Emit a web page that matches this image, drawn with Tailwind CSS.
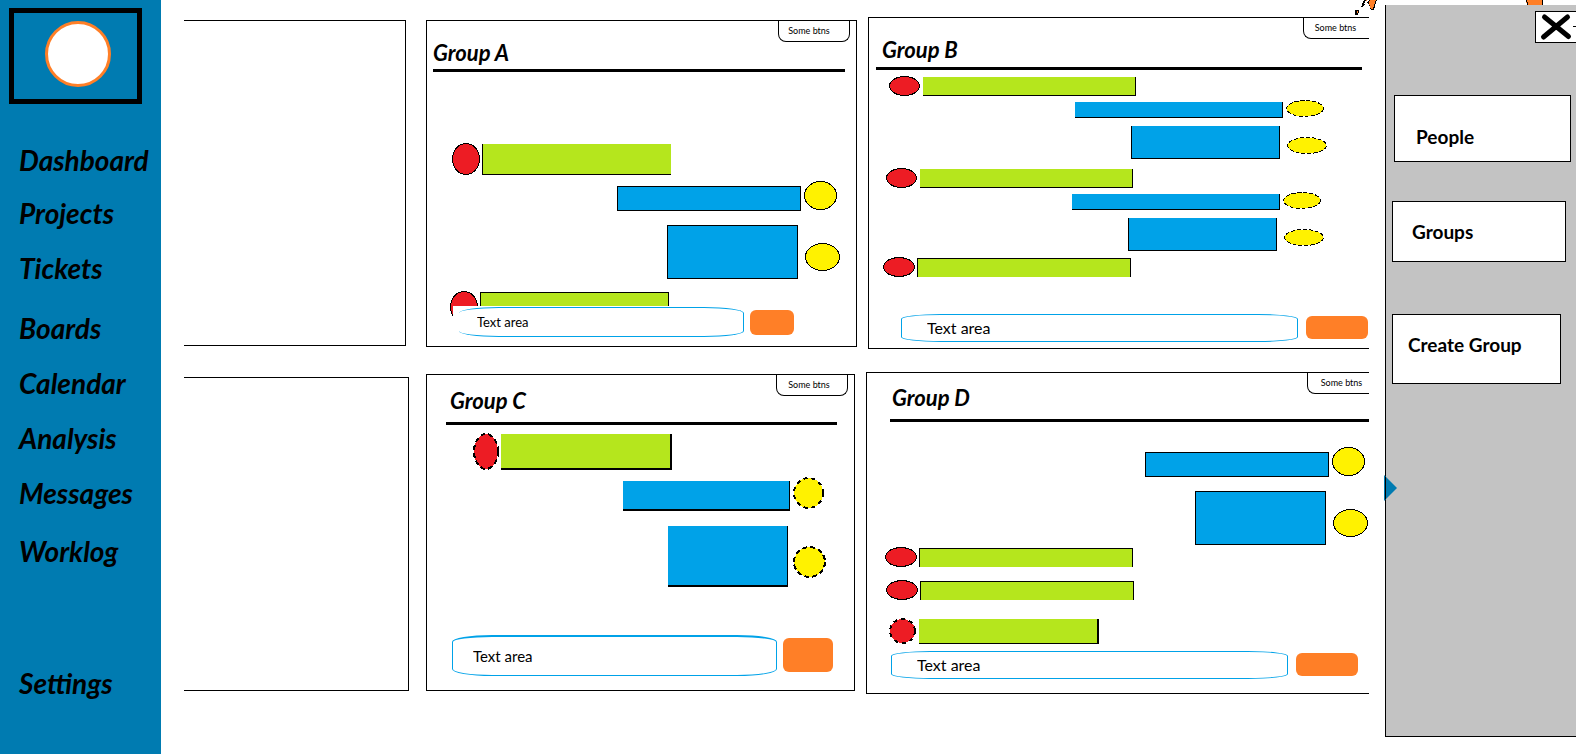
<!DOCTYPE html>
<html lang="en">
<head>
<meta charset="utf-8">
<title>Messages</title>
<script src="https://cdn.jsdelivr.net/npm/@tailwindcss/browser@4"></script>
</head>
<body class="min-h-screen bg-white font-[Lato,'Open_Sans',sans-serif] text-black">
<div class="flex min-h-screen overflow-hidden">

  <!-- Sidebar -->
  <aside class="w-[161px] shrink-0 bg-[#007bb1] pt-2">
    <a href="#" aria-label="Home" class="ml-[9px] flex h-24 w-[133px] justify-center border-5 border-black pt-2">
      <span class="ml-1 size-[66px] rounded-full border-3 border-[#ff7f27] bg-white"></span>
    </a>
    <nav class="flex flex-col pt-10 pl-[19px] text-[28px] leading-8 font-bold italic">
      <a href="#">Dashboard</a>
      <a href="#" class="mt-[21px]">Projects</a>
      <a href="#" class="mt-[23px]">Tickets</a>
      <a href="#" class="mt-[28px]">Boards</a>
      <a href="#" class="mt-[23px]">Calendar</a>
      <a href="#" class="mt-[23px]">Analysis</a>
      <a href="#" class="mt-[23px]">Messages</a>
      <a href="#" class="mt-[26px]">Worklog</a>
      <a href="#" class="mt-[100px]">Settings</a>
    </nav>
  </aside>

  <!-- Conversation boards -->
  <main class="relative min-w-0 flex-1 pt-[17px] pr-4 pl-[23px]">
    <svg class="absolute top-0 right-2 h-4 w-[22px]" viewBox="0 0 22 16" shape-rendering="crispEdges" aria-hidden="true">
      <path d="M0 10h4v2l-1 3H0z"/>
      <path d="M2 11h1v2h-1z" fill="#ff7f27"/>
      <path d="M9 0h2L9 4h2l3-4h8l-2 6-1 4h-3l-2-6-3-1-4 4H6z"/>
      <path d="M15 0h6l-2 5-1 4h-2l-2-6zM11 0h1l-1 2z" fill="#ff7f27"/>
    </svg>

    <div class="flex items-start">
      <section aria-label="Previous board" class="mt-[3px] mr-5 h-[326px] flex-[221_1_0px] border border-l-0 border-black"></section>

      <section class="mt-[3px] mr-[11px] min-w-0 flex-[429_1_0px] border border-black pb-[9px]">
        <header class="mr-[11px] ml-1.5 flex h-[51px] items-start justify-between border-b-3 border-black">
          <h2 class="pt-5 text-[22px] leading-6 font-bold italic">Group A</h2>
          <button class="-mr-[5px] h-[21px] w-[72px] rounded-b-lg border border-t-0 border-black pr-2.5 text-[9px] leading-4">Some btns</button>
        </header>
        <div class="mt-[71px] flex gap-0.5 pl-[25px]">
          <svg class="h-8 w-7" shape-rendering="crispEdges"><ellipse cx="14" cy="16" rx="13.5" ry="15.5" fill="#ed1c24" stroke="#000"/></svg>
          <div class="mt-px h-[31px] w-[189px] border-b border-l border-black bg-[#b5e61d]"></div>
        </div>
        <div class="mt-1.5 flex items-end justify-end gap-[3px] pr-[19px]">
          <div class="h-[25px] w-[184px] border border-black bg-[#00a2e8]"></div>
          <svg class="mb-px h-[29px] w-[33px]" shape-rendering="crispEdges"><ellipse cx="16.5" cy="14.5" rx="16" ry="14" fill="#fff200" stroke="#000"/></svg>
        </div>
        <div class="mt-3.5 flex justify-end gap-[7px] pr-4">
          <div class="h-[54px] w-[131px] border border-black bg-[#00a2e8]"></div>
          <svg class="mt-[18px] h-7 w-[35px]" shape-rendering="crispEdges"><ellipse cx="17.5" cy="14" rx="17" ry="13.5" fill="#fff200" stroke="#000"/></svg>
        </div>
        <div class="mt-3 flex h-[15px] items-start gap-0.5 pl-[23px]">
          <svg class="h-[25px] w-7 shrink-0" shape-rendering="crispEdges"><ellipse cx="14" cy="16" rx="13.5" ry="15.5" fill="#ed1c24" stroke="#000"/></svg>
          <div class="mt-px h-3.5 w-[189px] border border-b-0 border-black bg-[#b5e61d]"></div>
        </div>
        <form class="relative ml-[26px] flex items-center gap-1.5 bg-white pt-px pl-1.5">
          <input aria-label="Message Group A" placeholder="Text area" class="h-[30px] w-[285px] rounded-[40px/6px] border border-l-0 border-[#00a2e8] pl-[18px] text-[13px] placeholder:text-black">
          <button type="button" aria-label="Send to Group A" class="h-[25px] w-11 rounded-md bg-[#ff7f27]"></button>
        </form>
      </section>

      <section class="min-w-0 flex-[500_1_0px] border border-r-0 border-black pb-1.5">
        <header class="mr-[7px] ml-[7px] flex h-[52px] items-start justify-between border-b-3 border-black">
          <h2 class="pt-5 pl-1.5 text-[22px] leading-6 font-bold italic">Group B</h2>
          <button class="-mr-[7px] h-[21px] w-[66px] rounded-bl-lg border border-t-0 border-r-0 border-black pr-0.5 text-[9px] leading-4">Some btns</button>
        </header>
        <div class="mt-1.5 flex gap-[3px] pl-5">
          <svg class="h-5 w-[31px]" shape-rendering="crispEdges"><ellipse cx="15.5" cy="10" rx="15" ry="9.5" fill="#ed1c24" stroke="#000"/></svg>
          <div class="mt-px h-[19px] w-[213px] border-r border-b border-black bg-[#b5e61d]"></div>
        </div>
        <div class="mt-1 flex items-end justify-end gap-[3px] pr-[45px]">
          <div class="h-4 w-[208px] border-r border-b border-black bg-[#00a2e8]"></div>
          <svg class="mb-px h-[17px] w-[38px]" shape-rendering="crispEdges"><ellipse cx="19" cy="8.5" rx="18.5" ry="8" fill="#fff200" stroke="#000" stroke-dasharray="4 2"/></svg>
        </div>
        <div class="mt-2 flex justify-end gap-[7px] pr-[42px]">
          <div class="h-[33px] w-[149px] border border-t-0 border-black bg-[#00a2e8]"></div>
          <svg class="mt-[11px] h-[17px] w-10" shape-rendering="crispEdges"><ellipse cx="20" cy="8.5" rx="19.5" ry="8" fill="#fff200" stroke="#000" stroke-dasharray="4 2"/></svg>
        </div>
        <div class="mt-[9px] flex gap-[3px] pl-[17px]">
          <svg class="h-5 w-[31px]" shape-rendering="crispEdges"><ellipse cx="15.5" cy="10" rx="15" ry="9.5" fill="#ed1c24" stroke="#000"/></svg>
          <div class="mt-px h-[19px] w-[213px] border-r border-b border-black bg-[#b5e61d]"></div>
        </div>
        <div class="mt-1 flex items-end justify-end gap-[3px] pr-[48px]">
          <div class="h-4 w-[208px] border-r border-b border-black bg-[#00a2e8]"></div>
          <svg class="mb-px h-[17px] w-[38px]" shape-rendering="crispEdges"><ellipse cx="19" cy="8.5" rx="18.5" ry="8" fill="#fff200" stroke="#000" stroke-dasharray="4 2"/></svg>
        </div>
        <div class="mt-2 flex justify-end gap-[7px] pr-[45px]">
          <div class="h-[33px] w-[149px] border border-t-0 border-black bg-[#00a2e8]"></div>
          <svg class="mt-[11px] h-[17px] w-10" shape-rendering="crispEdges"><ellipse cx="20" cy="8.5" rx="19.5" ry="8" fill="#fff200" stroke="#000" stroke-dasharray="4 2"/></svg>
        </div>
        <div class="mt-1.5 flex gap-0.5 pl-3.5">
          <svg class="h-5 w-8" shape-rendering="crispEdges"><ellipse cx="16" cy="10" rx="15.5" ry="9.5" fill="#ed1c24" stroke="#000"/></svg>
          <div class="mt-px h-[19px] w-[214px] border border-b-0 border-black bg-[#b5e61d]"></div>
        </div>
        <form class="mt-[37px] flex items-center gap-2 pl-8">
          <input aria-label="Message Group B" placeholder="Text area" class="h-7 w-[397px] rounded-[40px/5px] border border-[#00a2e8] pb-0.5 pl-[25px] text-base placeholder:text-black">
          <button type="button" aria-label="Send to Group B" class="mb-0.5 h-[23px] w-[62px] rounded-md bg-[#ff7f27]"></button>
        </form>
      </section>
    </div>

    <div class="mt-[23px] flex items-start">
      <section aria-label="Previous board" class="mt-[5px] mr-[17px] h-[314px] flex-[224_1_0px] border border-l-0 border-black"></section>

      <section class="mt-0.5 mr-[11px] min-w-0 flex-[427_1_0px] border border-black pb-3.5">
        <header class="mr-[17px] ml-[19px] flex h-[50px] items-start justify-between border-b-3 border-black">
          <h2 class="pt-3.5 pl-1 text-[22px] leading-6 font-bold italic">Group C</h2>
          <button class="-mr-[11px] h-[21px] w-[72px] rounded-b-lg border border-t-0 border-black pr-1.5 text-[9px] leading-4">Some btns</button>
        </header>
        <div class="mt-2 flex gap-0.5 pl-[46px]">
          <svg class="h-[37px] w-[26px]" shape-rendering="crispEdges"><ellipse cx="13" cy="18.5" rx="12" ry="17.5" fill="#ed1c24" stroke="#000" stroke-width="2" stroke-dasharray="5 3"/></svg>
          <div class="mt-px h-9 w-[171px] border-r-2 border-b-2 border-black bg-[#b5e61d]"></div>
        </div>
        <div class="mt-[7px] flex items-end justify-end gap-[3px] pr-[30px]">
          <div class="h-[30px] w-[167px] border-r border-b-2 border-black bg-[#00a2e8]"></div>
          <svg class="mb-0.5 h-8 w-[31px]" shape-rendering="crispEdges"><ellipse cx="15.5" cy="16" rx="14.5" ry="15" fill="#fff200" stroke="#000" stroke-width="2" stroke-dasharray="4 4"/></svg>
        </div>
        <div class="mt-[15px] flex justify-end gap-[5px] pr-7">
          <div class="h-[61px] w-[120px] border-r border-b-2 border-black bg-[#00a2e8]"></div>
          <svg class="mt-5 h-8 w-[33px]" shape-rendering="crispEdges"><ellipse cx="16.5" cy="16" rx="15.5" ry="15" fill="#fff200" stroke="#000" stroke-width="2" stroke-dasharray="5 3"/></svg>
        </div>
        <form class="mt-12 flex items-center gap-1.5 pl-[25px]">
          <input aria-label="Message Group C" placeholder="Text area" class="h-[41px] w-[325px] rounded-[40px/7px] border border-t-2 border-[#00a2e8] pl-5 text-[15px] placeholder:text-black">
          <button type="button" aria-label="Send to Group C" class="mb-0.5 h-[34px] w-[50px] rounded-md bg-[#ff7f27]"></button>
        </form>
      </section>

      <section class="min-w-0 flex-[502_1_0px] border border-r-0 border-black pb-3.5">
        <header class="ml-[23px] flex h-[49px] items-start justify-between border-b-3 border-black">
          <h2 class="pt-[13px] pl-0.5 text-[22px] leading-6 font-bold italic">Group D</h2>
          <button class="h-[21px] w-[62px] rounded-bl-lg border border-t-0 border-r-0 border-black pl-1.5 text-[9px] leading-4">Some btns</button>
        </header>
        <div class="mt-[25px] flex items-end justify-end gap-[3px] pr-1">
          <div class="h-[25px] w-[184px] border border-black bg-[#00a2e8]"></div>
          <svg class="mb-px h-[29px] w-[33px]" shape-rendering="crispEdges"><ellipse cx="16.5" cy="14.5" rx="16" ry="14" fill="#fff200" stroke="#000"/></svg>
        </div>
        <div class="mt-3.5 flex justify-end gap-[7px] pr-px">
          <div class="h-[54px] w-[131px] border border-black bg-[#00a2e8]"></div>
          <svg class="mt-[18px] h-7 w-[35px]" shape-rendering="crispEdges"><ellipse cx="17.5" cy="14" rx="17" ry="13.5" fill="#fff200" stroke="#000"/></svg>
        </div>
        <div class="mt-0.5 flex gap-0.5 pl-[18px]">
          <svg class="h-5 w-8" shape-rendering="crispEdges"><ellipse cx="16" cy="10" rx="15.5" ry="9.5" fill="#ed1c24" stroke="#000"/></svg>
          <div class="mt-px h-[19px] w-[214px] border border-b-0 border-black bg-[#b5e61d]"></div>
        </div>
        <div class="mt-[13px] flex gap-0.5 pl-[19px]">
          <svg class="h-5 w-8" shape-rendering="crispEdges"><ellipse cx="16" cy="10" rx="15.5" ry="9.5" fill="#ed1c24" stroke="#000"/></svg>
          <div class="mt-px h-[19px] w-[214px] border border-b-0 border-black bg-[#b5e61d]"></div>
        </div>
        <div class="mt-[18px] flex gap-[3px] pl-[22px]">
          <svg class="h-[26px] w-[27px]" shape-rendering="crispEdges"><ellipse cx="13.5" cy="13" rx="12.5" ry="12" fill="#ed1c24" stroke="#000" stroke-width="2" stroke-dasharray="4 4"/></svg>
          <div class="mt-px h-[25px] w-[180px] border-r-2 border-b border-black bg-[#b5e61d]"></div>
        </div>
        <form class="mt-[7px] flex items-center gap-2 pl-6">
          <input aria-label="Message Group D" placeholder="Text area" class="h-7 w-[397px] rounded-[40px/5px] border border-[#00a2e8] pb-0.5 pl-[25px] text-base placeholder:text-black">
          <button type="button" aria-label="Send to Group D" class="mb-0.5 h-[23px] w-[62px] rounded-md bg-[#ff7f27]"></button>
        </form>
      </section>
    </div>
  </main>

  <!-- Drawer -->
  <aside class="relative mt-[5px] mb-[17px] flex w-[191px] shrink-0 flex-col border-b border-l border-black bg-[#c3c3c3] pt-1.5 pl-1.5 text-left">
    <svg class="absolute -top-[5px] right-[33px] h-[5px] w-[17px]" viewBox="0 0 17 5" shape-rendering="crispEdges" aria-hidden="true"><path d="M0 0h17v5H1z" fill="#ff7f27"/><path d="M0 0h1v2h1v3H1V2H0zM16 0h1v5h-1z"/></svg>
    <svg class="absolute top-[470px] -left-0.5 h-[26px] w-[13px]" viewBox="0 0 13 26" aria-hidden="true"><path d="M0 0L13 13L0 26z" fill="#007bb1"/><path d="M1 2h1v22h-1z"/></svg>
    <button aria-label="Close" class="h-8 w-[41px] self-end border border-r-0 border-black bg-white">
      <svg class="h-[30px] w-10" viewBox="0 0 40 30" aria-hidden="true"><path d="M8.500 5L32.500 24.500M31.500 5L7.500 25" stroke="#000" stroke-width="5" stroke-linecap="round"/><path d="M37 14h3v1h-3z"/></svg>
    </button>
    <button class="mt-[52px] mr-[5px] ml-0.5 h-[67px] border border-black bg-white pt-4 pl-[21px] text-left text-[19px] leading-6 font-bold">People</button>
    <button class="mt-[39px] mr-2.5 h-[61px] border border-black bg-white pl-[19px] text-left text-[19px] leading-6 font-bold">Groups</button>
    <button class="mt-[52px] mr-[15px] h-[70px] border border-black bg-white pb-2 pl-[15px] text-left text-[19px] leading-6 font-bold">Create Group</button>
  </aside>
</div>
</body>
</html>
